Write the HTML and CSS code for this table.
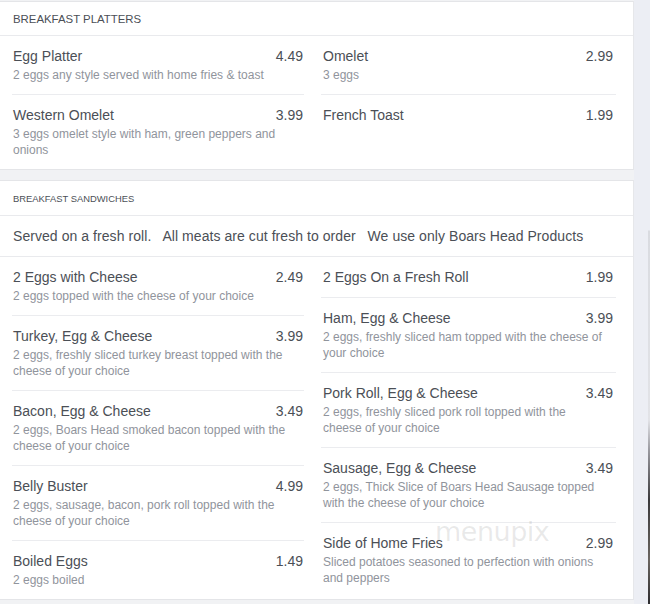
FILE: index.html
```html
<!DOCTYPE html>
<html>
<head>
<meta charset="utf-8">
<link rel="stylesheet" href="styles.css">
</head>
<body>
<div class="page">
  <main class="main">
    <section class="card">
      <div class="card-head">BREAKFAST PLATTERS</div>
      <div class="cols">
        <div class="col col-left">
          <div class="item">
            <div class="row"><span class="name">Egg Platter</span><span class="price">4.49</span></div>
            <div class="desc">2 eggs any style served with home fries &amp; toast</div>
          </div>
          <div class="item">
            <div class="row"><span class="name">Western Omelet</span><span class="price">3.99</span></div>
            <div class="desc">3 eggs omelet style with ham, green peppers and onions</div>
          </div>
        </div>
        <div class="col col-right">
          <div class="item">
            <div class="row"><span class="name">Omelet</span><span class="price">2.99</span></div>
            <div class="desc">3 eggs</div>
          </div>
          <div class="item item-plain">
            <div class="row"><span class="name">French Toast</span><span class="price">1.99</span></div>
          </div>
        </div>
      </div>
    </section>

    <section class="card">
      <div class="card-head card-head-small">BREAKFAST SANDWICHES</div>
      <div class="note">Served on a fresh roll.   All meats are cut fresh to order   We use only Boars Head Products</div>
      <div class="cols">
        <div class="col col-left">
          <div class="item">
            <div class="row"><span class="name">2 Eggs with Cheese</span><span class="price">2.49</span></div>
            <div class="desc">2 eggs topped with the cheese of your choice</div>
          </div>
          <div class="item">
            <div class="row"><span class="name">Turkey, Egg &amp; Cheese</span><span class="price">3.99</span></div>
            <div class="desc">2 eggs, freshly sliced turkey breast topped with the cheese of your choice</div>
          </div>
          <div class="item">
            <div class="row"><span class="name">Bacon, Egg &amp; Cheese</span><span class="price">3.49</span></div>
            <div class="desc">2 eggs, Boars Head smoked bacon topped with the cheese of your choice</div>
          </div>
          <div class="item">
            <div class="row"><span class="name">Belly Buster</span><span class="price">4.99</span></div>
            <div class="desc">2 eggs, sausage, bacon, pork roll topped with the cheese of your choice</div>
          </div>
          <div class="item">
            <div class="row"><span class="name">Boiled Eggs</span><span class="price">1.49</span></div>
            <div class="desc">2 eggs boiled</div>
          </div>
        </div>
        <div class="col col-right">
          <div class="item item-plain">
            <div class="row"><span class="name">2 Eggs On a Fresh Roll</span><span class="price">1.99</span></div>
          </div>
          <div class="item">
            <div class="row"><span class="name">Ham, Egg &amp; Cheese</span><span class="price">3.99</span></div>
            <div class="desc">2 eggs, freshly sliced ham topped with the cheese of your choice</div>
          </div>
          <div class="item">
            <div class="row"><span class="name">Pork Roll, Egg &amp; Cheese</span><span class="price">3.49</span></div>
            <div class="desc">2 eggs, freshly sliced pork roll topped with the cheese of your choice</div>
          </div>
          <div class="item">
            <div class="row"><span class="name">Sausage, Egg &amp; Cheese</span><span class="price">3.49</span></div>
            <div class="desc">2 eggs, Thick Slice of Boars Head Sausage topped with the cheese of your choice</div>
          </div>
          <div class="item">
            <div class="row"><span class="name">Side of Home Fries</span><span class="price">2.99</span></div>
            <div class="desc">Sliced potatoes seasoned to perfection with onions and peppers</div>
          </div>
        </div>
      </div>
    </section>
    <div class="watermark">menupix</div>
  </main>
  <div class="gutter"></div>
  <div class="edge"></div>
</div>
</body>
</html>
```

FILE: styles.css
```css
html, body {
  margin: 0;
  padding: 0;
}
body {
  background: #eceef4;
  font-family: "Liberation Sans", Arial, sans-serif;
  height: 604px;
  overflow: hidden;
}
.page {
  display: flex;
  height: 604px;
}
.main {
  position: relative;
  width: 634px;
  flex: none;
  background: #f1f2f4;
  padding-top: 1px;
  display: flex;
  flex-direction: column;
  gap: 10px;
}
.gutter {
  width: 14px;
  flex: none;
}
.edge {
  width: 2px;
  flex: none;
  background: linear-gradient(to bottom, #eceef4 0, #eceef4 230px, #d9dbe0 231px, #e2e3e7 420px, #9a9aa0 450px, #3b3a3c 500px, #6a6560 560px, #2d2c2f 604px);
}
.card {
  background: #fff;
  border-top: 1px solid #e4e5e8;
  border-bottom: 1px solid #e4e5e8;
  border-right: 1px solid #e6e7ea;
}
.card-head {
  padding: 11px 13px 9px;
  font-size: 11.4px;
  line-height: 13px;
  color: #4b4f56;
  border-bottom: 1px solid #e9eaed;
}
.card-head-small {
  font-size: 9.4px;
  padding-bottom: 10px;
}
.note {
  padding: 10px 13px;
  font-size: 14px;
  line-height: 20px;
  letter-spacing: 0.06px;
  color: #4b4f56;
  border-bottom: 1px solid #e9eaed;
  white-space: pre;
}
.cols {
  display: grid;
  grid-template-columns: 292px 295px;
  column-gap: 17px;
  padding-left: 12px;
  align-items: start;
}
.col-left .item {
  padding-left: 1px;
  padding-right: 1px;
}
.col-right .item {
  padding-left: 2px;
  padding-right: 3px;
}
.item {
  padding-top: 10px;
  padding-bottom: 11px;
  border-bottom: 1px solid #ebecef;
}
.item-plain {
  padding-bottom: 10px;
}
.item:last-child {
  border-bottom: none;
}
.row {
  display: flex;
  justify-content: space-between;
  font-size: 14px;
  line-height: 20px;
  color: #4b4f56;
}
.desc {
  margin-top: 1px;
  font-size: 12px;
  line-height: 16px;
  color: #90949c;
  padding-right: 6px;
}
.watermark {
  position: absolute;
  left: 435px;
  top: 516px;
  font-family: "DejaVu Sans", sans-serif;
  font-size: 27px;
  letter-spacing: -0.5px;
  color: rgba(120, 120, 120, 0.16);
  pointer-events: none;
}
```
